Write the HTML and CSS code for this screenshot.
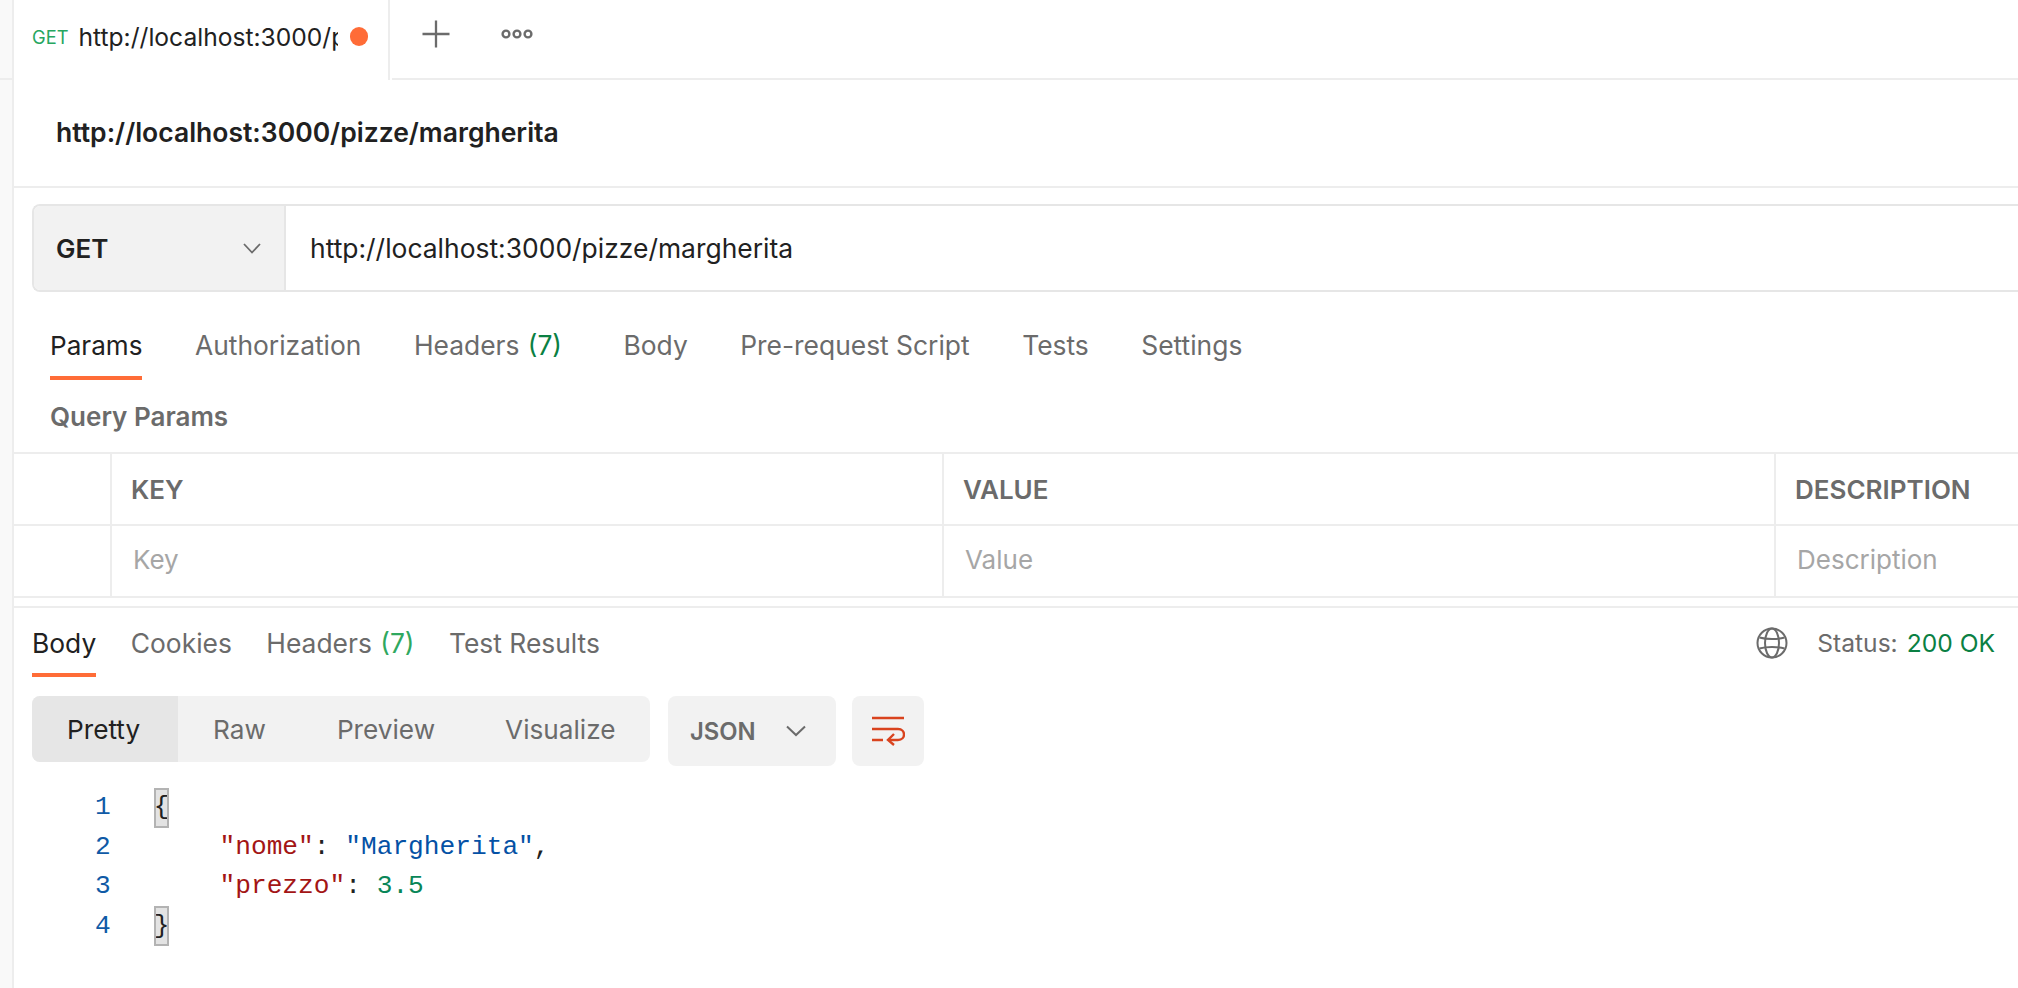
FILE: index.html
```html
<!DOCTYPE html>
<html lang="en">
<head>
<meta charset="utf-8">
<title>Postman request</title>
<link rel="stylesheet" href="styles.css">
</head>
<body>
<div class="app">
  <aside class="rail"><div class="rail-top"></div></aside>
  <main class="main">
    <div class="tabbar">
      <div class="req-tab">
        <span class="req-method">GET</span>
        <span class="req-name">http://localhost:3000/pizze/margherita</span>
        <span class="req-dot"></span>
      </div>
      <div class="tabbar-rest">
        <svg class="plus" width="30" height="30" viewBox="0 0 30 30"><path d="M15 1.500V28.500M1.500 15H28.500" stroke="#6b6b6b" stroke-width="2.300" fill="none"/></svg>
        <svg class="more" width="34" height="12" viewBox="0 0 34 12"><g stroke="#6b6b6b" stroke-width="2.400" fill="none"><circle cx="6" cy="6" r="3.400"/><circle cx="17" cy="6" r="3.400"/><circle cx="28" cy="6" r="3.400"/></g></svg>
      </div>
    </div>
    <header class="title-row"><h1 class="title">http://localhost:3000/pizze/margherita</h1></header>
    <div class="url-wrap">
      <div class="url-bar">
        <div class="method"><span>GET</span>
          <svg class="chev" width="18" height="12" viewBox="0 0 18 12"><path d="M1 2L9 10.500L17 2" stroke="#6b6b6b" stroke-width="1.800" fill="none"/></svg>
        </div>
        <div class="url">http://localhost:3000/pizze/margherita</div>
      </div>
    </div>
    <nav class="req-tabs">
      <span class="rt active">Params</span>
      <span class="rt">Authorization</span>
      <span class="rt rt-headers">Headers <em class="count">(7)</em></span>
      <span class="rt">Body</span>
      <span class="rt">Pre-request Script</span>
      <span class="rt">Tests</span>
      <span class="rt">Settings</span>
    </nav>
    <div class="qp">Query Params</div>
    <div class="table">
      <div class="row head">
        <div class="cell c0"></div>
        <div class="cell c1">KEY</div>
        <div class="cell c2">VALUE</div>
        <div class="cell c3">DESCRIPTION</div>
      </div>
      <div class="row ph">
        <div class="cell c0"></div>
        <div class="cell c1">Key</div>
        <div class="cell c2">Value</div>
        <div class="cell c3">Description</div>
      </div>
    </div>
    <section class="response">
      <div class="res-head">
        <nav class="res-tabs">
          <span class="rs active">Body</span>
          <span class="rs">Cookies</span>
          <span class="rs">Headers <em class="count light">(7)</em></span>
          <span class="rs">Test Results</span>
        </nav>
        <div class="status">
          <svg class="globe" width="32" height="32" viewBox="0 0 32 32"><g stroke="#6b6b6b" stroke-width="2" fill="none"><circle cx="16" cy="16" r="14.500"/><ellipse cx="16" cy="16" rx="7" ry="14.500"/><path d="M3.500 10.500C10 12.500 22 12.500 28.500 10.500M3.500 21.500C10 19.500 22 19.500 28.500 21.500"/></g></svg>
          <span class="st-label">Status:</span><span class="st-value">200 OK</span>
        </div>
      </div>
      <div class="controls">
        <div class="seg">
          <span class="sg active">Pretty</span>
          <span class="sg s-raw">Raw</span>
          <span class="sg s-prev">Preview</span>
          <span class="sg s-vis">Visualize</span>
        </div>
        <div class="fmt"><span>JSON</span>
          <svg width="20" height="12" viewBox="0 0 20 12"><path d="M1 1.500L10 10L19 1.500" stroke="#6b6b6b" stroke-width="2" fill="none"/></svg>
        </div>
        <div class="wrap-btn">
          <svg width="34" height="30" viewBox="0 0 34 30"><g stroke="#d9431e" stroke-width="2.400" fill="none"><path d="M1 2H33M1 13H27C35 13 35 24 27 24H18M1 24H12"/><path d="M23 18L17 24L23 29"/></g></svg>
        </div>
      </div>
      <div class="code">
        <div class="ln"><span class="no">1</span><span class="brace">{</span></div>
        <div class="ln"><span class="no">2</span><span class="in"><span class="k">"nome"</span>: <span class="s">"Margherita"</span>,</span></div>
        <div class="ln"><span class="no">3</span><span class="in"><span class="k">"prezzo"</span>: <span class="n">3.5</span></span></div>
        <div class="ln"><span class="no">4</span><span class="brace">}</span></div>
      </div>
    </section>
  </main>
</div>
</body>
</html>
```
FILE: styles.css
```css
* { box-sizing: border-box; }
html, body { margin: 0; height: 100%; background: #fff; overflow: hidden; }
body { font-family: Inter, "Liberation Sans", sans-serif; color: #212121; }
em { font-style: normal; }
.app { display: flex; width: 2018px; height: 988px; }
.rail { width: 14px; flex: none; background: #f9f9f9; border-right: 2px solid #ededed; }
.rail-top { height: 80px; border-bottom: 2px solid #ededed; }
.main { flex: 1; min-width: 0; overflow: hidden; }

.tabbar { display: flex; height: 80px; }
.req-tab { width: 376px; flex: none; display: flex; align-items: center; padding: 0 0 7px 18px; border-right: 2px solid #ededed; }
.req-method { font-size: 18.300px; color: #26a65f; width: 46.500px; flex: none; }
.req-name { font-size: 24.600px; width: 259px; flex: none; overflow: hidden; white-space: nowrap; color: #212121; }
.req-dot { width: 18.500px; height: 18.500px; border-radius: 50%; background: #ff6c37; margin-left: 12px; flex: none; }
.tabbar-rest { flex: 1; display: flex; align-items: center; margin-left: 2px; padding: 0 0 11px 28.500px; border-bottom: 2px solid #ededed; }
.more { margin-left: 49px; }

.title-row { height: 108px; display: flex; align-items: center; padding: 0 0 2px 42px; border-bottom: 2px solid #ededed; }
.title { margin: 0; font-size: 26.500px; font-weight: 600; color: #212121; white-space: nowrap; }

.url-wrap { padding: 16px 0 0 18px; }
.url-bar { display: flex; height: 88px; border: 2px solid #e6e6e6; border-right: 0; border-radius: 8px 0 0 8px; }
.method { width: 252px; flex: none; display: flex; align-items: center; justify-content: space-between; padding: 0 23px 0 22px; background: #f2f2f2; border-right: 2px solid #e6e6e6; border-radius: 6px 0 0 6px; font-size: 26px; font-weight: 600; }
.url { flex: 1; display: flex; align-items: center; padding-left: 24px; font-size: 26.450px; color: #212121; white-space: nowrap; }

.req-tabs { display: flex; height: 88px; padding: 0 0 0 36px; gap: 52.500px; }
.rt { display: flex; align-items: center; height: 88px; padding-top: 22px; font-size: 26.400px; color: #6b6b6b; border-bottom: 4px solid transparent; white-space: nowrap; }
.rt.active { font-size: 26.100px; color: #212121; border-bottom-color: #ff6c37; }
.rt-headers { margin-right: 9px; white-space: pre; }
.count { color: #0a8043; margin-left: 1px; }
.count.light { color: #2fa85f; }

.qp { height: 72px; padding: 21px 0 0 36px; font-size: 26px; font-weight: 600; color: #6b6b6b; line-height: 32px; }
.table { border-top: 2px solid #ededed; }
.row { display: flex; height: 72px; border-bottom: 2px solid #ededed; }
.cell { display: flex; align-items: center; border-right: 2px solid #ededed; font-size: 26px; white-space: nowrap; padding-left: 19px; }
.c0 { width: 98px; flex: none; padding: 0; }
.c1, .c2 { width: 832px; flex: none; }
.c3 { flex: 1; border-right: 0; }
.head .cell { font-weight: 600; color: #6b6b6b; }
.ph .cell { color: #a6a6a6; padding: 0 0 3px 21px; }
.ph .c0 { padding: 0; }

.response { margin-top: 8px; border-top: 2px solid #ededed; padding: 0 0 0 18px; }
.res-head { display: flex; justify-content: space-between; height: 69px; padding-right: 23px; }
.res-tabs { display: flex; gap: 34.500px; }
.rs { display: flex; align-items: center; height: 69px; padding-top: 5px; font-size: 26.400px; color: #6b6b6b; border-bottom: 4px solid transparent; white-space: pre; }
.rs.active { color: #212121; border-bottom-color: #ff6c37; }
.status { display: flex; align-items: center; font-size: 24.600px; color: #6b6b6b; }
.globe { margin-right: 29px; }
.st-value { color: #0a8043; margin-left: 9px; }

.controls { display: flex; align-items: flex-start; margin-top: 19px; }
.seg { display: flex; width: 618px; height: 66px; background: #f2f2f2; border-radius: 8px; overflow: hidden; font-size: 26.200px; color: #6b6b6b; }
.sg { display: flex; align-items: center; white-space: nowrap; }
.sg.active { width: 146px; padding-left: 35px; background: #e6e6e6; color: #212121; }
.s-raw { margin-left: 35px; }
.s-prev { margin-left: 71px; }
.s-vis { margin-left: 70px; }
.fmt { width: 168px; height: 70px; margin-left: 18px; background: #f2f2f2; border-radius: 8px; display: flex; align-items: center; justify-content: space-between; padding: 0 30px 0 22px; font-size: 23.800px; font-weight: 600; color: #6b6b6b; }
.wrap-btn { width: 72px; height: 70px; margin-left: 16px; background: #f2f2f2; border-radius: 8px; display: flex; align-items: center; justify-content: center; }

.code { margin-top: 22px; font-family: "Liberation Mono", "DejaVu Sans Mono", monospace; font-size: 26.200px; }
.ln { display: flex; align-items: center; height: 39.500px; line-height: 39.500px; white-space: pre; }
.no { width: 122px; flex: none; padding-left: 63px; color: #0f5aa6; }
.brace { width: 15px; height: 40px; display: flex; align-items: center; justify-content: center; background: #e3e3e3; border: 2px solid #b3b3b3; color: #212121; overflow: hidden; }
.in { margin-left: 65.500px; color: #212121; }
.k { color: #a31515; }
.s { color: #0451a5; }
.n { color: #098658; }
```
